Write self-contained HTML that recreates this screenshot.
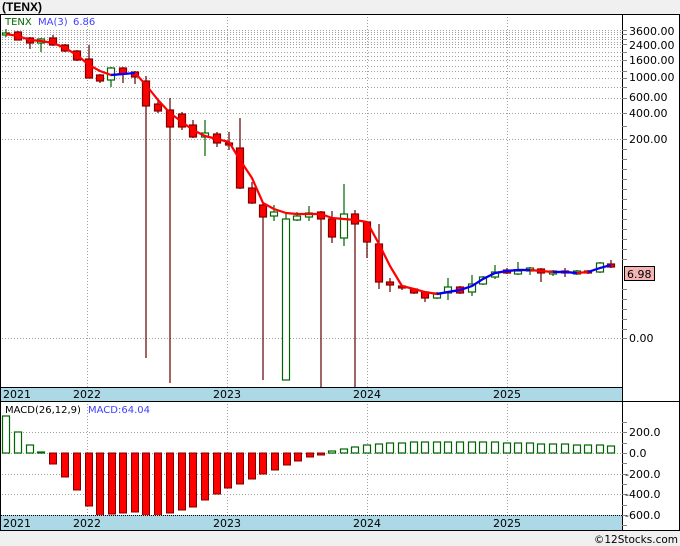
<!DOCTYPE html>
<html><head><meta charset="utf-8"><style>
html,body{margin:0;padding:0;background:#f0f0f0;}
svg{display:block;font-family:"DejaVu Sans","Liberation Sans",sans-serif;}
</style></head><body>
<svg width="680" height="546" viewBox="0 0 680 546" xmlns="http://www.w3.org/2000/svg">
<rect x="0" y="0" width="680" height="546" fill="#f0f0f0"/>
<text x="2" y="11" font-size="12" font-weight="bold" fill="#000" font-family="Liberation Sans,sans-serif">(TENX)</text>
<rect x="1" y="14" width="679" height="516" fill="#fff"/>
<!-- main grid -->
<g stroke="#a0a0a0" stroke-dasharray="1,2" stroke-width="1">
<line x1="2" y1="30.5" x2="622" y2="30.5"/><line x1="2" y1="32.5" x2="622" y2="32.5"/><line x1="2" y1="34.5" x2="622" y2="34.5"/>
<line x1="2" y1="37.5" x2="622" y2="37.5"/><line x1="2" y1="39.5" x2="622" y2="39.5"/><line x1="2" y1="42.5" x2="622" y2="42.5"/>
<line x1="2" y1="44.5" x2="622" y2="44.5"/><line x1="2" y1="47.5" x2="622" y2="47.5"/><line x1="2" y1="52.5" x2="622" y2="52.5"/>
<line x1="2" y1="56.5" x2="622" y2="56.5"/><line x1="2" y1="60.5" x2="622" y2="60.5"/><line x1="2" y1="66.5" x2="622" y2="66.5"/>
<line x1="2" y1="71.5" x2="622" y2="71.5"/><line x1="2" y1="78.5" x2="622" y2="78.5"/><line x1="2" y1="87.5" x2="622" y2="87.5"/>
<line x1="2" y1="98.5" x2="622" y2="98.5"/><line x1="2" y1="113.5" x2="622" y2="113.5"/><line x1="2" y1="139.5" x2="622" y2="139.5"/>
<line x1="2" y1="338.5" x2="622" y2="338.5"/>
<line x1="87.5" y1="14" x2="87.5" y2="387"/><line x1="227.5" y1="14" x2="227.5" y2="387"/><line x1="367.5" y1="14" x2="367.5" y2="387"/><line x1="507.5" y1="14" x2="507.5" y2="387"/>
<line x1="87.5" y1="401" x2="87.5" y2="515"/><line x1="227.5" y1="401" x2="227.5" y2="515"/><line x1="367.5" y1="401" x2="367.5" y2="515"/><line x1="507.5" y1="401" x2="507.5" y2="515"/>
<line x1="2" y1="432.5" x2="622" y2="432.5"/><line x1="2" y1="453.5" x2="622" y2="453.5"/><line x1="2" y1="474.5" x2="622" y2="474.5"/><line x1="2" y1="494.5" x2="622" y2="494.5"/>
</g>
<text x="5" y="25" font-size="10" fill="#006400">TENX</text>
<text x="38" y="25" font-size="10" fill="#4040ff">MA(3)</text>
<text x="73" y="25" font-size="10" fill="#4040ff">6.86</text>
<!-- candles -->
<g stroke-width="1.2">
<g stroke="#600000">
<line x1="18" y1="31" x2="18" y2="40"/><line x1="30" y1="37" x2="30" y2="49"/><line x1="53" y1="35" x2="53" y2="46"/><line x1="65" y1="44" x2="65" y2="52"/><line x1="77" y1="50" x2="77" y2="61"/><line x1="89" y1="45" x2="89" y2="78"/><line x1="100" y1="74" x2="100" y2="83"/><line x1="123" y1="67" x2="123" y2="83"/><line x1="135" y1="71" x2="135" y2="84"/><line x1="146" y1="76" x2="146" y2="358"/><line x1="158" y1="100" x2="158" y2="113"/><line x1="170" y1="98" x2="170" y2="383"/><line x1="182" y1="112" x2="182" y2="130"/><line x1="193" y1="120" x2="193" y2="138"/><line x1="217" y1="132" x2="217" y2="147"/><line x1="229" y1="132" x2="229" y2="150"/><line x1="240" y1="118" x2="240" y2="189"/><line x1="252" y1="182" x2="252" y2="204"/><line x1="263" y1="204" x2="263" y2="380"/><line x1="321" y1="211" x2="321" y2="387"/><line x1="332" y1="211" x2="332" y2="243"/><line x1="355" y1="210" x2="355" y2="387"/><line x1="367" y1="221" x2="367" y2="258"/><line x1="379" y1="224" x2="379" y2="289"/><line x1="390" y1="278" x2="390" y2="292"/><line x1="402" y1="285" x2="402" y2="290"/><line x1="414" y1="288" x2="414" y2="294"/><line x1="425" y1="291" x2="425" y2="302"/><line x1="460" y1="286" x2="460" y2="294"/><line x1="507" y1="268" x2="507" y2="274"/><line x1="541" y1="268" x2="541" y2="282"/><line x1="565" y1="268" x2="565" y2="277"/><line x1="588" y1="270" x2="588" y2="274"/><line x1="611" y1="260" x2="611" y2="268"/>
</g>
<g stroke="#006400">
<line x1="6" y1="29" x2="6" y2="37"/><line x1="41" y1="38" x2="41" y2="52"/><line x1="111" y1="67" x2="111" y2="87"/><line x1="205" y1="120" x2="205" y2="156"/><line x1="274" y1="205" x2="274" y2="221"/><line x1="286" y1="212" x2="286" y2="219"/><line x1="297" y1="212" x2="297" y2="221"/><line x1="309" y1="206" x2="309" y2="221"/><line x1="344" y1="184" x2="344" y2="246"/><line x1="437" y1="292" x2="437" y2="299"/><line x1="448" y1="278" x2="448" y2="300"/><line x1="472" y1="275" x2="472" y2="296"/><line x1="483" y1="276" x2="483" y2="285"/><line x1="495" y1="265" x2="495" y2="279"/><line x1="518" y1="262" x2="518" y2="275"/><line x1="530" y1="267" x2="530" y2="275"/><line x1="553" y1="270" x2="553" y2="276"/><line x1="577" y1="270" x2="577" y2="275"/><line x1="600" y1="262" x2="600" y2="273"/>
</g>
<g fill="#ff0000" stroke="#800000">
<rect x="14.5" y="32" width="7" height="8"/><rect x="26.5" y="38" width="7" height="5"/><rect x="49.5" y="38" width="7" height="7"/><rect x="61.5" y="45" width="7" height="6"/><rect x="73.5" y="51" width="7" height="9"/><rect x="85.5" y="59" width="7" height="19"/><rect x="96.5" y="75" width="7" height="6"/><rect x="119.5" y="68" width="7" height="6"/><rect x="131.5" y="72" width="7" height="5"/><rect x="142.5" y="81" width="7" height="25"/><rect x="154.5" y="104" width="7" height="7"/><rect x="166.5" y="110" width="7" height="17"/><rect x="178.5" y="114" width="7" height="13"/><rect x="189.5" y="125" width="7" height="12"/><rect x="213.5" y="134" width="7" height="9"/><rect x="225.5" y="143" width="7" height="2"/><rect x="236.5" y="148" width="7" height="40"/><rect x="248.5" y="188" width="7" height="15"/><rect x="259.5" y="205" width="7" height="12"/><rect x="317.5" y="212" width="7" height="7"/><rect x="328.5" y="219" width="7" height="18"/><rect x="351.5" y="214" width="7" height="10"/><rect x="363.5" y="222" width="7" height="20"/><rect x="375.5" y="244" width="7" height="38"/><rect x="386.5" y="282" width="7" height="3"/><rect x="398.5" y="286" width="7" height="2"/><rect x="410.5" y="289" width="7" height="4"/><rect x="421.5" y="292" width="7" height="6"/><rect x="456.5" y="287" width="7" height="6"/><rect x="503.5" y="270" width="7" height="3"/><rect x="537.5" y="269" width="7" height="4"/><rect x="561.5" y="271" width="7" height="2"/><rect x="584.5" y="271" width="7" height="2"/><rect x="607.5" y="264" width="7" height="3"/>
</g>
<g fill="#fff" stroke="#006400">
<rect x="2.5" y="33" width="7" height="2"/><rect x="37.5" y="39" width="7" height="4"/><rect x="107.5" y="68" width="7" height="12"/><rect x="201.5" y="133" width="7" height="4"/><rect x="270.5" y="212" width="7" height="4"/><rect x="282.5" y="219" width="7" height="161"/><rect x="293.5" y="216" width="7" height="4"/><rect x="305.5" y="213" width="7" height="4"/><rect x="340.5" y="214" width="7" height="24"/><rect x="433.5" y="293" width="7" height="5"/><rect x="444.5" y="287" width="7" height="6"/><rect x="468.5" y="284" width="7" height="8"/><rect x="479.5" y="277" width="7" height="7"/><rect x="491.5" y="272" width="7" height="5"/><rect x="514.5" y="271" width="7" height="3"/><rect x="526.5" y="268" width="7" height="3"/><rect x="549.5" y="271" width="7" height="3"/><rect x="573.5" y="271" width="7" height="3"/><rect x="596.5" y="263" width="7" height="9"/>
</g>
</g>
<!-- MA -->
<polyline fill="none" stroke="#ff0000" stroke-width="2.2" stroke-linejoin="round" points="6,34 18,36 30,40 41,41 53,43 65,48 77,55 89,65 100,71 111,75 123,74 135,73 146,85 158,100 170,113 182,122 193,130 205,136 217,139 229,142 240,160 252,178 263,203 274,209 286,213 297,214 309,214 321,214 332,218 344,219 355,220 367,222 379,244 390,266 402,286 414,289 425,292 437,294 448,292 460,290 472,286 483,279 495,273 507,271 518,270 530,270 541,271 553,272 565,272 577,273 588,272 600,268 611,265"/>
<polyline fill="none" stroke="#0000ff" stroke-width="2.2" points="111,75 123,74 135,73"/>
<polyline fill="none" stroke="#0000ff" stroke-width="2.2" points="437,294 448,292 460,290 472,286 483,279 495,273 507,271 518,270 530,270"/>
<polyline fill="none" stroke="#0000ff" stroke-width="2.2" points="553,272 565,272 577,273"/>
<polyline fill="none" stroke="#0000ff" stroke-width="2.2" points="588,272 600,268 611,265"/>
<!-- MACD -->
<text x="5" y="413" font-size="10" fill="#000">MACD(26,12,9)</text>
<text x="88" y="413" font-size="10" fill="#4040ff">MACD:64.04</text>
<g fill="#fff" stroke="#006400" stroke-width="1.2">
<rect x="2.5" y="416" width="7" height="37"/><rect x="14.5" y="432" width="7" height="21"/><rect x="26.5" y="445" width="7" height="8"/><rect x="37.5" y="452" width="7" height="1"/>
<rect x="328.5" y="451" width="7" height="2"/><rect x="340.5" y="449" width="7" height="4"/><rect x="351.5" y="447" width="7" height="6"/><rect x="363.5" y="445" width="7" height="8"/><rect x="375.5" y="444" width="7" height="9"/><rect x="386.5" y="443" width="7" height="10"/><rect x="398.5" y="443" width="7" height="10"/><rect x="410.5" y="442" width="7" height="11"/><rect x="421.5" y="442" width="7" height="11"/><rect x="433.5" y="442" width="7" height="11"/><rect x="444.5" y="442" width="7" height="11"/><rect x="456.5" y="442" width="7" height="11"/><rect x="468.5" y="442" width="7" height="11"/><rect x="479.5" y="442" width="7" height="11"/><rect x="491.5" y="442" width="7" height="11"/><rect x="503.5" y="443" width="7" height="10"/><rect x="514.5" y="443" width="7" height="10"/><rect x="526.5" y="443" width="7" height="10"/><rect x="537.5" y="444" width="7" height="9"/><rect x="549.5" y="444" width="7" height="9"/><rect x="561.5" y="444" width="7" height="9"/><rect x="573.5" y="445" width="7" height="8"/><rect x="584.5" y="445" width="7" height="8"/><rect x="596.5" y="445" width="7" height="8"/><rect x="607.5" y="446" width="7" height="7"/>
</g>
<g fill="#ff0000" stroke="#800000" stroke-width="1">
<rect x="49.5" y="453" width="7" height="11"/><rect x="61.5" y="453" width="7" height="24"/><rect x="73.5" y="453" width="7" height="37"/><rect x="85.5" y="453" width="7" height="53"/><rect x="96.5" y="453" width="7" height="63"/><rect x="108.5" y="453" width="7" height="61"/><rect x="119.5" y="453" width="7" height="60"/><rect x="131.5" y="453" width="7" height="59"/><rect x="142.5" y="453" width="7" height="63"/><rect x="154.5" y="453" width="7" height="63"/><rect x="166.5" y="453" width="7" height="60"/><rect x="178.5" y="453" width="7" height="57"/><rect x="189.5" y="453" width="7" height="54"/><rect x="201.5" y="453" width="7" height="47"/><rect x="213.5" y="453" width="7" height="41"/><rect x="224.5" y="453" width="7" height="35"/><rect x="236.5" y="453" width="7" height="31"/><rect x="248.5" y="453" width="7" height="26"/><rect x="259.5" y="453" width="7" height="21"/><rect x="271.5" y="453" width="7" height="17"/><rect x="283.5" y="453" width="7" height="12"/><rect x="294.5" y="453" width="7" height="8"/><rect x="306.5" y="453" width="7" height="4"/><rect x="317.5" y="453" width="7" height="2"/>
</g>
<!-- axis bands -->
<rect x="1" y="387" width="621" height="14" fill="#add8e6"/>
<rect x="1" y="515" width="621" height="15" fill="#add8e6"/>
<line x1="1" y1="387.5" x2="622" y2="387.5" stroke="#000"/>
<line x1="1" y1="515.5" x2="622" y2="515.5" stroke="#000" stroke-dasharray="1,1"/>
<line x1="0" y1="401.5" x2="680" y2="401.5" stroke="#000"/>
<g font-size="11" fill="#000">
<text x="3" y="398">2021</text><text x="73" y="398">2022</text><text x="213" y="398">2023</text><text x="353" y="398">2024</text><text x="493" y="398">2025</text>
<text x="3" y="527">2021</text><text x="73" y="527">2022</text><text x="213" y="527">2023</text><text x="353" y="527">2024</text><text x="493" y="527">2025</text>
</g>
<!-- frame -->
<rect x="0.5" y="14.5" width="679" height="516" fill="none" stroke="#000"/>
<line x1="622.5" y1="14" x2="622.5" y2="530" stroke="#000"/>
<!-- right axis ticks -->
<g stroke="#808080">
<line x1="622" y1="30.5" x2="627" y2="30.5"/><line x1="622" y1="34.5" x2="627" y2="34.5"/><line x1="622" y1="39.5" x2="627" y2="39.5"/><line x1="622" y1="44.5" x2="627" y2="44.5"/><line x1="622" y1="52.5" x2="627" y2="52.5"/><line x1="622" y1="60.5" x2="627" y2="60.5"/><line x1="622" y1="71.5" x2="627" y2="71.5"/><line x1="622" y1="78.5" x2="627" y2="78.5"/><line x1="622" y1="87.5" x2="627" y2="87.5"/><line x1="622" y1="98.5" x2="627" y2="98.5"/><line x1="622" y1="113.5" x2="627" y2="113.5"/><line x1="622" y1="126.5" x2="627" y2="126.5"/><line x1="622" y1="139.5" x2="627" y2="139.5"/><line x1="622" y1="149.5" x2="627" y2="149.5"/><line x1="622" y1="159.5" x2="627" y2="159.5"/><line x1="622" y1="169.5" x2="627" y2="169.5"/><line x1="622" y1="179.5" x2="627" y2="179.5"/><line x1="622" y1="189.5" x2="627" y2="189.5"/><line x1="622" y1="199.5" x2="627" y2="199.5"/><line x1="622" y1="209.5" x2="627" y2="209.5"/><line x1="622" y1="219.5" x2="627" y2="219.5"/><line x1="622" y1="229.5" x2="627" y2="229.5"/><line x1="622" y1="239.5" x2="627" y2="239.5"/><line x1="622" y1="249.5" x2="627" y2="249.5"/><line x1="622" y1="259.5" x2="627" y2="259.5"/><line x1="622" y1="289.5" x2="627" y2="289.5"/><line x1="622" y1="299.5" x2="627" y2="299.5"/><line x1="622" y1="309.5" x2="627" y2="309.5"/><line x1="622" y1="319.5" x2="627" y2="319.5"/><line x1="622" y1="329.5" x2="627" y2="329.5"/><line x1="622" y1="338.5" x2="627" y2="338.5"/>
<line x1="622" y1="422.5" x2="627" y2="422.5"/><line x1="622" y1="432.5" x2="627" y2="432.5"/><line x1="622" y1="443.5" x2="627" y2="443.5"/><line x1="622" y1="453.5" x2="627" y2="453.5"/><line x1="622" y1="463.5" x2="627" y2="463.5"/><line x1="622" y1="474.5" x2="627" y2="474.5"/><line x1="622" y1="484.5" x2="627" y2="484.5"/><line x1="622" y1="494.5" x2="627" y2="494.5"/><line x1="622" y1="505.5" x2="627" y2="505.5"/><line x1="622" y1="515.5" x2="627" y2="515.5"/><line x1="622" y1="525.5" x2="627" y2="525.5"/>
</g>
<g font-size="11" fill="#000">
<text x="629" y="35">3600.00</text><text x="629" y="49">2400.00</text><text x="629" y="64">1600.00</text><text x="629" y="81">1000.00</text><text x="629" y="101">600.00</text><text x="629" y="117">400.00</text><text x="629" y="143">200.00</text><text x="629" y="342">0.00</text>
<text x="629" y="436">200.0</text><text x="629" y="457">0.0</text><text x="625" y="478">-200.0</text><text x="625" y="498">-400.0</text><text x="625" y="519">-600.0</text>
</g>
<rect x="624.5" y="266.5" width="30" height="14" fill="#f4b4b4" stroke="#000"/>
<text x="627" y="278" font-size="11" fill="#000">6.98</text>
<text x="678" y="543" font-size="10.5" fill="#000" text-anchor="end">©12Stocks.com</text>
</svg>
</body></html>
